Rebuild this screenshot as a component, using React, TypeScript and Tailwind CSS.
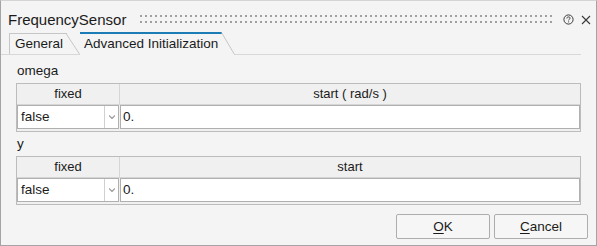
import React from "react";

const font = { fontFamily: '"Liberation Sans", Arial, sans-serif' };

function Grip() {
  return (
    <svg width="412" height="9" className="block">
      <defs>
        <pattern id="dots" width="5" height="6" patternUnits="userSpaceOnUse">
          <rect x="0" y="0" width="2" height="2" fill="#a0a0a0" />
        </pattern>
      </defs>
      <rect x="0" y="0" width="412" height="8" fill="url(#dots)" />
    </svg>
  );
}

function ParamTable({ label, header }: { label: string; header: string }) {
  return (
    <div className="flex flex-col">
      <div className="h-[16px] leading-[16px] text-[13.5px] pl-[1px]">{label}</div>
      <div className="mt-[4px] border border-[#bcbcbc] bg-[#f0f0f0]">
        <div className="flex h-[21px] border-b border-[#d6d6d6] text-[13px] leading-[20px]">
          <div className="w-[103px] border-r border-[#d6d6d6] text-center">fixed</div>
          <div className="flex-1 text-center">{header}</div>
        </div>
        <div className="flex h-[26px] pb-[2px] gap-[1px] text-[13.5px]">
          <div className="w-[102px] h-[24px] flex bg-white border border-[#b0b0b0]">
            <div className="flex-1 pl-[3px] leading-[22px]">false</div>
            <div className="w-[14px] border-l border-[#d0d0d0] flex items-center justify-center">
              <svg width="6" height="4" viewBox="0 0 6 4">
                <path d="M0 0.5 L3 3.5 L6 0.5" fill="none" stroke="#9a9a9a" strokeWidth="1.2" />
              </svg>
            </div>
          </div>
          <div className="flex-1 h-[24px] bg-white border border-[#b0b0b0] pl-[2px] leading-[22px]">0.</div>
        </div>
      </div>
    </div>
  );
}

export default function App() {
  return (
    <div
      style={font}
      className="w-[597px] h-[246px] bg-[#f4f4f4] border-x border-b border-[#a4a4a4] border-t border-t-[#d4d4d4] text-[#1b1b1b] flex flex-col overflow-hidden"
    >
      {/* title bar */}
      <div className="h-[30px] flex items-start pl-[7px] pt-[10px]">
        <div className="text-[15px] leading-[17px]">FrequencySensor</div>
        <div className="ml-[14px] mt-[4px]">
          <Grip />
        </div>
        <div className="ml-[11px] mt-[3px] flex items-center gap-[7px]">
          <svg width="11" height="11" viewBox="0 0 11 11">
            <circle cx="5.5" cy="5.5" r="4.6" fill="none" stroke="#3a3a3a" strokeWidth="1" />
            <path d="M3.9 4.4 C3.9 3.3 4.6 2.9 5.5 2.9 C6.4 2.9 7.1 3.4 7.1 4.2 C7.1 5.1 5.6 5.2 5.6 6.4" fill="none" stroke="#3a3a3a" strokeWidth="1" />
            <rect x="5.1" y="7.4" width="1" height="1" fill="#3a3a3a" />
          </svg>
          <svg width="10" height="10" viewBox="0 0 10 10">
            <path d="M1 1 L9 9 M9 1 L1 9" stroke="#3a3a3a" strokeWidth="1.1" />
          </svg>
        </div>
      </div>

      {/* tabs */}
      <div className="h-[24px] flex items-end pl-[8px] mr-[15px] border-b border-[#d8d8d8] text-[13.5px]">
        <div className="flex h-[21px]">
          <div className="border-l border-t border-[#c6c6c6] pl-[5px] pr-[3px] pt-[2px] leading-[16px]">General</div>
          <svg width="14" height="21" className="block">
            <line x1="0" y1="0.5" x2="13.5" y2="21" stroke="#c6c6c6" strokeWidth="1" />
            <line x1="0" y1="0.5" x2="1" y2="0.5" stroke="#c6c6c6" strokeWidth="1" />
          </svg>
        </div>
        <div className="relative z-10 -mb-px flex h-[23px]">
          <div className="bg-[#f4f4f4] border-t-2 border-[#1c7db6] pl-[4px] pr-[3px] pt-[2px] leading-[16px]">
            Advanced Initialization
          </div>
          <svg width="14" height="23" className="block">
            <polygon points="0,0 0.5,0 13.5,23 0,23" fill="#f4f4f4" />
            <line x1="0" y1="1" x2="1" y2="1" stroke="#1c7db6" strokeWidth="2" />
            <line x1="0.5" y1="0.5" x2="13.5" y2="22.5" stroke="#c6c6c6" strokeWidth="1" />
          </svg>
        </div>
      </div>

      {/* content */}
      <div className="flex flex-col px-[15px] pt-[8px] gap-[4px]">
        <ParamTable label="omega" header="start ( rad/s )" />
        <ParamTable label="y" header="start" />
      </div>

      {/* buttons */}
      <div className="flex justify-end gap-[4px] pr-[8px] mt-[9px] text-[13.5px]">
        <button className="w-[94px] h-[25px] border border-[#adadad] rounded-[2px] bg-[#f6f6f6] leading-[23px]">
          <span className="underline underline-offset-2">O</span>K
        </button>
        <button className="w-[94px] h-[25px] border border-[#adadad] rounded-[2px] bg-[#f6f6f6] leading-[23px]">
          <span className="underline underline-offset-2">C</span>ancel
        </button>
      </div>
    </div>
  );
}
